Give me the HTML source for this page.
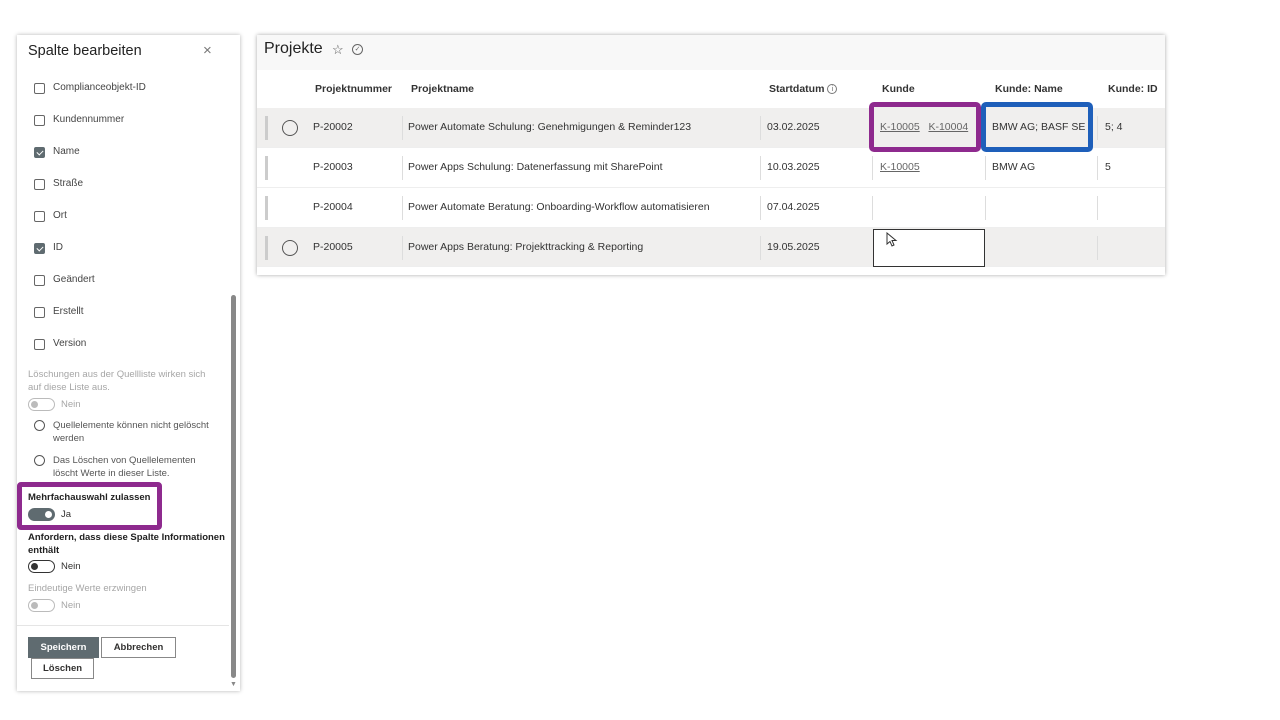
<!DOCTYPE html>
<html><head><meta charset="utf-8"><style>
*{box-sizing:border-box;margin:0;padding:0}
body{width:1280px;height:720px;background:#fff;font-family:"Liberation Sans",sans-serif;position:relative;overflow:hidden;color:#323130}
.a{position:absolute;white-space:nowrap}
.panel{position:absolute;left:17px;top:35px;width:223px;height:656px;background:#fff;box-shadow:0 0 4px rgba(0,0,0,.3)}
.cb{position:absolute;left:17px;width:11px;height:11px;border:1px solid #666;border-radius:2px}
.cb.on{background:#5f6b70;border-color:#5f6b70}
.cb.on:after{content:"";position:absolute;left:3px;top:1px;width:3px;height:5px;border:solid #fff;border-width:0 1px 1px 0;transform:rotate(45deg)}
.lbl{position:absolute;left:36px;font-size:10px;color:#444}
.tg{position:absolute;left:11px;width:27px;height:13px;border-radius:7px;border:1px solid #333}
.tg i{position:absolute;top:2px;width:7px;height:7px;border-radius:50%}
.rd{position:absolute;left:17px;width:11px;height:11px;border:1px solid #555;border-radius:50%}
.g{color:#a6a6a6}
.card{position:absolute;left:257px;top:35px;width:908px;height:240px;background:#fff;box-shadow:0 0 4px rgba(0,0,0,.35)}
.row{position:absolute;left:0;width:908px;height:40px;border-bottom:1px solid #eee}
.t{position:absolute;font-size:10.5px;color:#333;white-space:nowrap}
.h{position:absolute;font-size:10.5px;font-weight:bold;color:#333;top:84px;white-space:nowrap}
.sep{position:absolute;width:1px;height:24px;top:8px;background:#ddd}
.bar{position:absolute;left:8px;top:8px;width:3px;height:24px;background:#ccc}
.circ{position:absolute;left:25px;top:12px;width:16px;height:16px;border:1px solid #555;border-radius:50%}
u{color:#666}
</style></head><body>
<div class="panel">
<div class="a" style="left:11px;top:8px;font-size:14.5px;color:#222">Spalte bearbeiten</div>
<div class="a" style="left:186px;top:7px;font-size:15px;color:#777">×</div>
<div class="cb" style="top:48px"></div><div class="lbl" style="top:47px">Complianceobjekt-ID</div>
<div class="cb" style="top:80px"></div><div class="lbl" style="top:79px">Kundennummer</div>
<div class="cb on" style="top:112px"></div><div class="lbl" style="top:111px">Name</div>
<div class="cb" style="top:144px"></div><div class="lbl" style="top:143px">Straße</div>
<div class="cb" style="top:176px"></div><div class="lbl" style="top:175px">Ort</div>
<div class="cb on" style="top:208px"></div><div class="lbl" style="top:207px">ID</div>
<div class="cb" style="top:240px"></div><div class="lbl" style="top:239px">Geändert</div>
<div class="cb" style="top:272px"></div><div class="lbl" style="top:271px">Erstellt</div>
<div class="cb" style="top:304px"></div><div class="lbl" style="top:303px">Version</div>
<div class="a g" style="left:11px;top:333px;font-size:9.5px;line-height:13px;white-space:normal;width:190px">Löschungen aus der Quellliste wirken sich auf diese Liste aus.</div>
<div class="tg" style="top:363px;border-color:#bbb"><i style="left:2px;background:#bbb"></i></div><div class="a g" style="left:44px;top:364px;font-size:9.5px">Nein</div>
<div class="rd" style="top:385px"></div><div class="a" style="left:36px;top:384px;font-size:9.5px;line-height:13px;color:#555;white-space:normal;width:160px">Quellelemente können nicht gelöscht werden</div>
<div class="rd" style="top:420px"></div><div class="a" style="left:36px;top:419px;font-size:9.5px;line-height:13px;color:#555;white-space:normal;width:160px">Das Löschen von Quellelementen löscht Werte in dieser Liste.</div>
<div class="a" style="left:0;top:447px;width:145px;height:48px;border:5px solid #8e2a8e;border-radius:4px"></div>
<div class="a" style="left:11px;top:457px;font-size:9.5px;font-weight:bold;color:#222">Mehrfachauswahl zulassen</div>
<div class="tg" style="top:473px;background:#5f6b70;border-color:#5f6b70"><i style="left:16px;background:#fff"></i></div><div class="a" style="left:44px;top:474px;font-size:9.5px">Ja</div>
<div class="a" style="left:11px;top:496px;font-size:9.5px;line-height:13px;font-weight:bold;color:#222;white-space:normal;width:200px">Anfordern, dass diese Spalte Informationen enthält</div>
<div class="tg" style="top:525px"><i style="left:2px;background:#333"></i></div><div class="a" style="left:44px;top:526px;font-size:9.5px">Nein</div>
<div class="a g" style="left:11px;top:548px;font-size:9.5px">Eindeutige Werte erzwingen</div>
<div class="tg" style="top:564px;border-color:#bbb"><i style="left:2px;background:#bbb"></i></div><div class="a g" style="left:44px;top:565px;font-size:9.5px">Nein</div>
<div class="a" style="left:0;top:590px;width:212px;height:1px;background:#e5e5e5"></div>
<div class="a" style="left:11px;top:602px;width:71px;height:21px;background:#5f6b70;color:#fff;font-size:9.5px;font-weight:bold;text-align:center;line-height:21px">Speichern</div>
<div class="a" style="left:84px;top:602px;width:75px;height:21px;border:1px solid #888;font-size:9.5px;font-weight:bold;text-align:center;line-height:19px">Abbrechen</div>
<div class="a" style="left:14px;top:623px;width:63px;height:21px;border:1px solid #888;font-size:9.5px;font-weight:bold;text-align:center;line-height:19px">Löschen</div>
<div class="a" style="left:214px;top:260px;width:5px;height:383px;background:#888;border-radius:3px"></div>
<div class="a" style="left:213px;top:646px;font-size:7px;color:#888">▼</div>
</div>

<div class="card">
<div class="a" style="left:0;top:0;width:908px;height:35px;background:#f8f8f8"></div>
<div class="a" style="left:7px;top:5px;font-size:16px;color:#222">Projekte</div>
<div class="a" style="left:75px;top:7px;font-size:13px;color:#555">☆</div>
<div class="a" style="left:95px;top:9px;width:11px;height:11px;border:1px solid #666;border-radius:50%;font-size:7px;line-height:9px;text-align:center;color:#666">✓</div>
<div class="h" style="left:58px;top:48px">Projektnummer</div>
<div class="h" style="left:154px;top:48px">Projektname</div>
<div class="h" style="left:512px;top:48px">Startdatum <span style="font-weight:normal;color:#666;border:1px solid #777;border-radius:50%;font-size:7px;display:inline-block;width:10px;height:10px;text-align:center;line-height:9px;vertical-align:1px">i</span></div>
<div class="h" style="left:625px;top:48px">Kunde</div>
<div class="h" style="left:738px;top:48px">Kunde: Name</div>
<div class="h" style="left:851px;top:48px">Kunde: ID</div>

<div class="row" style="top:73px;background:#f0efee"><div class="bar"></div><div class="circ"></div>
<div class="t" style="left:56px;top:13px">P-20002</div><div class="sep" style="left:145px"></div>
<div class="t" style="left:151px;top:13px">Power Automate Schulung: Genehmigungen &amp; Reminder123</div><div class="sep" style="left:503px"></div>
<div class="t" style="left:510px;top:13px">03.02.2025</div>
<div class="sep" style="left:840px"></div><div class="t" style="left:848px;top:13px">5; 4</div></div>

<div class="row" style="top:113px"><div class="bar"></div>
<div class="t" style="left:56px;top:13px">P-20003</div><div class="sep" style="left:145px"></div>
<div class="t" style="left:151px;top:13px">Power Apps Schulung: Datenerfassung mit SharePoint</div><div class="sep" style="left:503px"></div>
<div class="t" style="left:510px;top:13px">10.03.2025</div><div class="sep" style="left:615px"></div>
<div class="t" style="left:623px;top:13px"><u>K-10005</u></div><div class="sep" style="left:728px"></div>
<div class="t" style="left:735px;top:13px">BMW AG</div><div class="sep" style="left:840px"></div>
<div class="t" style="left:848px;top:13px">5</div></div>

<div class="row" style="top:153px"><div class="bar"></div>
<div class="t" style="left:56px;top:13px">P-20004</div><div class="sep" style="left:145px"></div>
<div class="t" style="left:151px;top:13px">Power Automate Beratung: Onboarding-Workflow automatisieren</div><div class="sep" style="left:503px"></div>
<div class="t" style="left:510px;top:13px">07.04.2025</div><div class="sep" style="left:615px"></div><div class="sep" style="left:728px"></div><div class="sep" style="left:840px"></div></div>

<div class="row" style="top:193px;background:#f0efee;height:39px"><div class="bar"></div><div class="circ"></div>
<div class="t" style="left:56px;top:13px">P-20005</div><div class="sep" style="left:145px"></div>
<div class="t" style="left:151px;top:13px">Power Apps Beratung: Projekttracking &amp; Reporting</div><div class="sep" style="left:503px"></div>
<div class="t" style="left:510px;top:13px">19.05.2025</div><div class="sep" style="left:840px"></div>
<div class="a" style="left:616px;top:1px;width:112px;height:38px;background:#fff;border:1px solid #333"></div>
<svg class="a" style="left:629px;top:4px" width="12" height="16" viewBox="0 0 12 16"><path d="M1 1 L1 12 L4 9.5 L6 14 L8 13 L6 8.5 L10 8.5 Z" fill="#fff" stroke="#333" stroke-width="1"/></svg>
</div>

<div class="a" style="left:612px;top:67px;width:112px;height:50px;border:5px solid #8e2a8e;border-radius:5px;background:#f0efee"></div>
<div class="t" style="left:623px;top:86px"><u>K-10005</u>&nbsp;&nbsp;&nbsp;<u>K-10004</u></div>
<div class="a" style="left:724px;top:67px;width:112px;height:50px;border:5px solid #1e5fba;border-radius:5px;background:#f0efee"></div>
<div class="t" style="left:735px;top:86px">BMW AG; BASF SE</div>
</div>
</body></html>
